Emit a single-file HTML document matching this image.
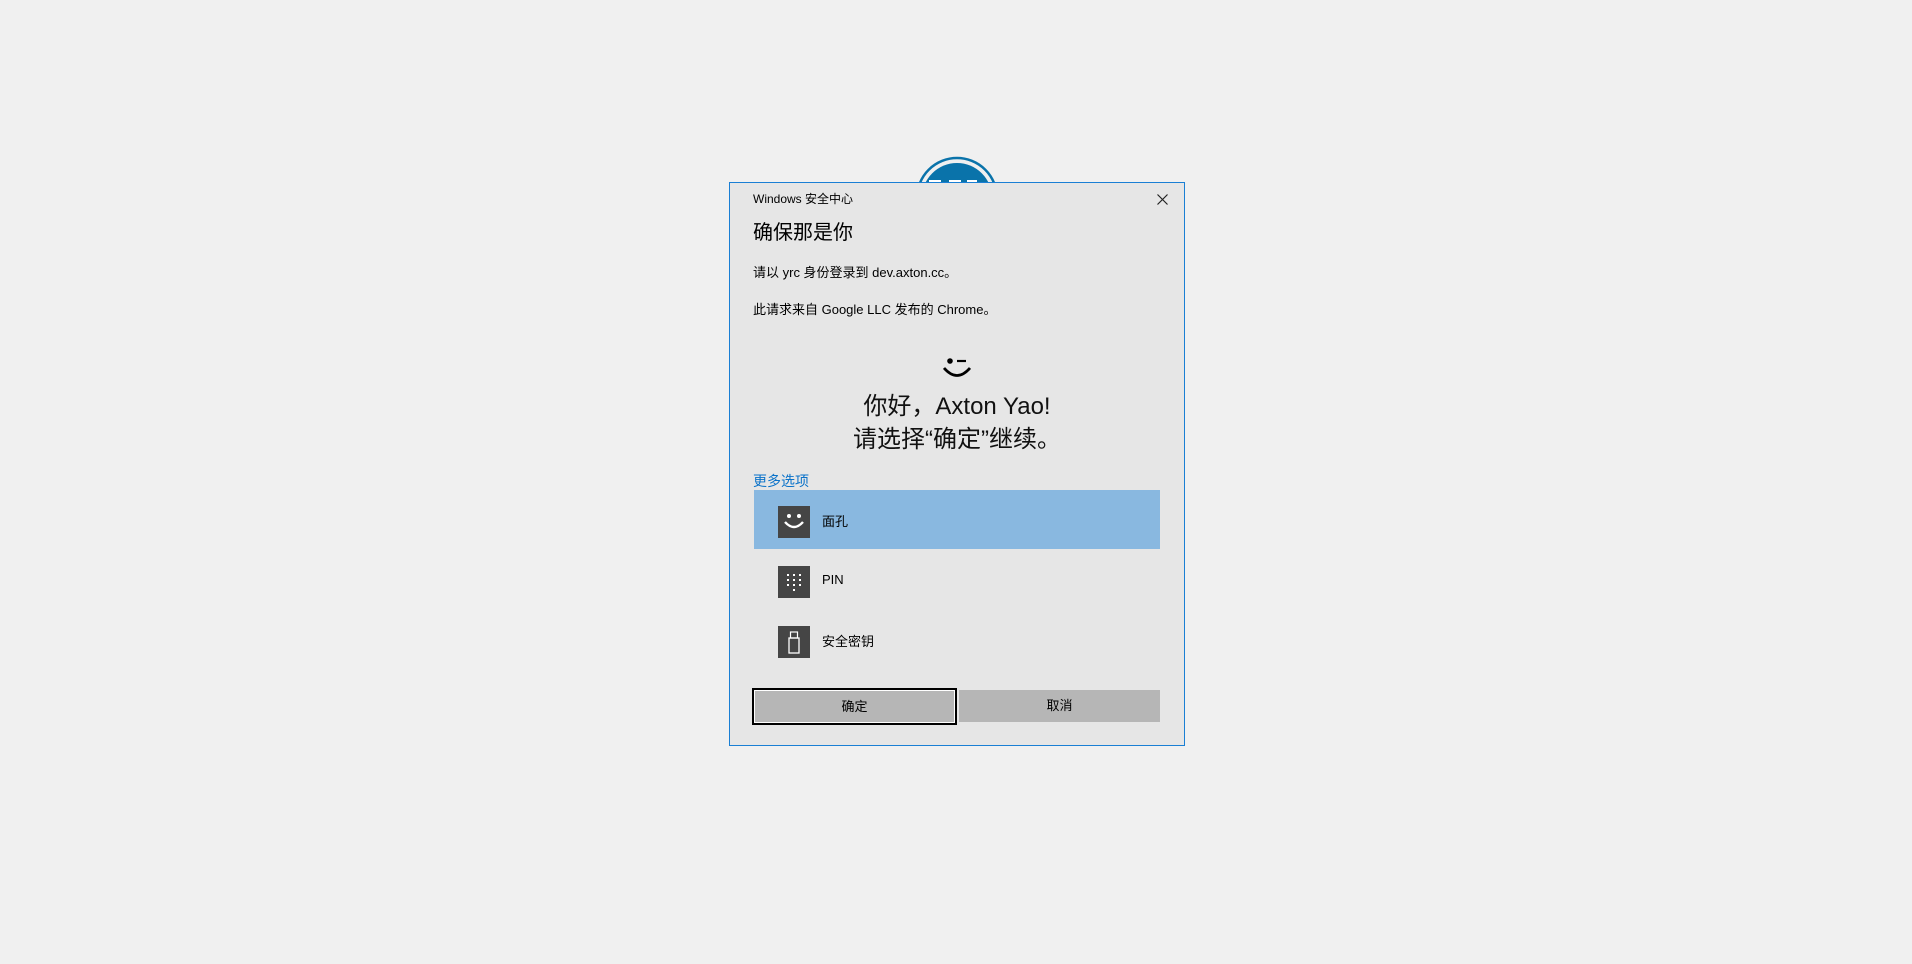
<!DOCTYPE html>
<html><head><meta charset="utf-8"><style>
*{margin:0;padding:0;box-sizing:border-box}
body{width:1912px;height:964px;background:#f0f0f0;position:relative;overflow:hidden;font-family:"Liberation Sans","Noto Sans CJK SC",sans-serif;color:#000}
.a{position:absolute;white-space:nowrap}
#dlg{position:absolute;left:729px;top:182px;width:456px;height:564px;background:#e6e6e6;border:1px solid #1a7fd4}
.ic{position:absolute;left:778px;width:32px;height:32px;background:#454545}
</style></head><body>
<svg class="a" style="left:915px;top:156px" width="84" height="40" viewBox="0 0 84 40">
<circle cx="42" cy="42" r="40" fill="#f0f0f0" stroke="#0a73aa" stroke-width="2.5"/>
<circle cx="42" cy="42" r="35" fill="#0a73aa"/>
<path d="M14 26 h12 M34 26 h12 M52 26 h10" stroke="#fff" stroke-width="4"/>
</svg>
<div id="dlg"></div>
<div class="a" style="left:753px;top:190px;font-size:12px">Windows 安全中心</div>
<svg class="a" style="left:1157px;top:194px" width="11" height="11"><path d="M0.5 .5L10.5 10.5M10.5 .5L.5 10.5" stroke="#222" stroke-width="1.2"/></svg>
<div class="a" style="left:753px;top:216px;font-size:20px">确保那是你</div>
<div class="a" style="left:753px;top:262px;font-size:13px">请以 yrc 身份登录到 dev.axton.cc。</div>
<div class="a" style="left:753px;top:299px;font-size:13px">此请求来自 Google LLC 发布的 Chrome。</div>
<svg class="a" style="left:940px;top:355px" width="34" height="25"><circle cx="10" cy="6" r="2.8" fill="#000"/><path d="M17 6h9" stroke="#000" stroke-width="2.2"/><path d="M4 13 Q17 28 30 13" fill="none" stroke="#000" stroke-width="2.8"/></svg>
<div class="a" style="left:729px;width:456px;top:390px;font-size:24px;text-align:center;line-height:33px;color:#111">你好，Axton Yao!<br>请选择“确定”继续。</div>
<div class="a" style="left:753px;top:471px;font-size:14px;color:#0a72c9">更多选项</div>
<div class="a" style="left:754px;top:490px;width:406px;height:59px;background:#89b8e0"></div>
<div class="ic" style="top:506px"><svg width="32" height="32"><circle cx="11" cy="10" r="2" fill="#fff"/><circle cx="21" cy="10" r="2" fill="#fff"/><path d="M7 16 Q16 26 25 16" fill="none" stroke="#fff" stroke-width="2.4"/></svg></div>
<div class="a" style="left:822px;top:511px;font-size:13px">面孔</div>
<div class="ic" style="top:566px"><svg width="32" height="32" fill="#fff"><rect x="9" y="8" width="2" height="2"/><rect x="15" y="8" width="2" height="2"/><rect x="21" y="8" width="2" height="2"/><rect x="9" y="13" width="2" height="2"/><rect x="15" y="13" width="2" height="2"/><rect x="21" y="13" width="2" height="2"/><rect x="9" y="18" width="2" height="2"/><rect x="15" y="18" width="2" height="2"/><rect x="21" y="18" width="2" height="2"/><rect x="15" y="23" width="2" height="2"/></svg></div>
<div class="a" style="left:822px;top:572px;font-size:13px">PIN</div>
<div class="ic" style="top:626px"><svg width="32" height="32"><rect x="11" y="12" width="10" height="15" fill="none" stroke="#fff" stroke-width="1.3"/><rect x="12.5" y="6" width="7" height="6" fill="none" stroke="#fff" stroke-width="1.2"/></svg></div>
<div class="a" style="left:822px;top:631px;font-size:13px">安全密钥</div>
<div class="a" style="left:752px;top:688px;width:205px;height:37px;background:#b6b6b6;border:2px solid #000;box-shadow:inset 0 0 0 1px #fff;font-size:13px;text-align:center;line-height:33px">确定</div>
<div class="a" style="left:959px;top:690px;width:201px;height:32px;background:#b6b6b6;font-size:13px;text-align:center;line-height:32px">取消</div>
</body></html>
